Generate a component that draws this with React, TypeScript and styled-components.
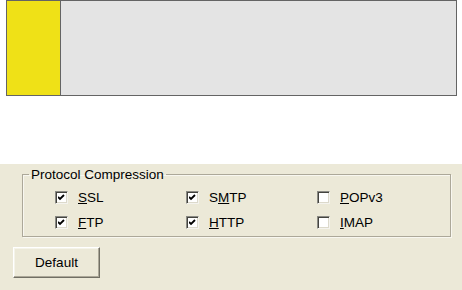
import React from "react";
import styled, { createGlobalStyle } from "styled-components";

const Global = createGlobalStyle`
  html, body { margin: 0; padding: 0; background: #ffffff; }
  body { font-family: "Liberation Sans", Arial, sans-serif; }
`;

const Page = styled.div`
  width: 462px;
  height: 290px;
  display: flex;
  flex-direction: column;
  overflow: hidden;
`;

const TopArea = styled.div`
  height: 164px;
  padding-left: 6px;
  box-sizing: border-box;
`;

const Swatch = styled.div`
  width: 451px;
  height: 96px;
  box-sizing: border-box;
  border: 1px solid #646464;
  display: flex;
`;

const Yellow = styled.div`
  width: 53px;
  background: #efe117;
  border-right: 1px solid #646464;
`;

const Grey = styled.div`
  flex: 1;
  background: #e4e4e4;
`;

const Panel = styled.div`
  flex: 1;
  background: #ece9d8;
  padding: 3px 11px 0 14px;
  display: flex;
  flex-direction: column;
  align-items: flex-start;
  font-size: 13.5px;
  color: #000;
`;

const Group = styled.fieldset`
  margin: 0 0 0 8px;
  padding: 3px 0 1px 0;
  width: 429px;
  box-sizing: border-box;
  border: 1px solid #aca899;
  box-shadow: inset 1px 1px 0 #f8f7f0, 1px 1px 0 #f8f7f0;
`;

const Legend = styled.legend`
  margin-left: 6px;
  padding: 0 2px;
  line-height: 15px;
  font-size: 13.5px;
  color: #000;
`;

const Grid = styled.div`
  display: grid;
  padding-left: 32px;
  grid-template-columns: 131px 131px 131px;
  grid-auto-rows: 25px;
`;

const Option = styled.label`
  display: flex;
  align-items: center;
  gap: 10px;
  line-height: 15px;
`;

const Box = styled.span<{ $checked: boolean }>`
  width: 13px;
  height: 13px;
  box-sizing: border-box;
  border-top: 1px solid #8a8a84;
  border-left: 1px solid #8a8a84;
  border-right: 1px solid #f4f3ee;
  border-bottom: 1px solid #f4f3ee;
  box-shadow: inset 1px 1px 0 #44443f, inset -1px -1px 0 #dcd9cb;
  background: #ffffff;
  display: flex;
  align-items: center;
  justify-content: center;
`;

const U = styled.span`
  text-decoration: underline;
`;

const Button = styled.button`
  margin-top: 10px;
  margin-left: -1px;
  width: 87px;
  height: 31px;
  box-sizing: border-box;
  background: #ece9d8;
  font-family: "Liberation Sans", Arial, sans-serif;
  font-size: 13.5px;
  color: #000;
  border-top: 1px solid #ffffff;
  border-left: 1px solid #ffffff;
  border-right: 1px solid #716f64;
  border-bottom: 1px solid #716f64;
  box-shadow: inset -1px -1px 0 #aca899, inset 1px 1px 0 #f5f4ea;
  padding: 0;
`;

const Check = () => (
  <svg width="7" height="7" viewBox="0 0 7 7">
    <path d="M0 3 L2 5 L6 1" stroke="#000" strokeWidth="1.8" fill="none" />
  </svg>
);

type Opt = { pre: string; key: string; post: string; checked: boolean };

const options: Opt[] = [
  { pre: "", key: "S", post: "SL", checked: true },
  { pre: "S", key: "M", post: "TP", checked: true },
  { pre: "", key: "P", post: "OPv3", checked: false },
  { pre: "", key: "F", post: "TP", checked: true },
  { pre: "", key: "H", post: "TTP", checked: true },
  { pre: "", key: "I", post: "MAP", checked: false },
];

export default function App() {
  return (
    <Page>
      <Global />
      <TopArea>
        <Swatch>
          <Yellow />
          <Grey />
        </Swatch>
      </TopArea>
      <Panel>
        <Group>
          <Legend>Protocol Compression</Legend>
          <Grid>
            {options.map((o, i) => (
              <Option key={i}>
                <Box $checked={o.checked}>{o.checked && <Check />}</Box>
                <span>
                  {o.pre}
                  <U>{o.key}</U>
                  {o.post}
                </span>
              </Option>
            ))}
          </Grid>
        </Group>
        <Button>Default</Button>
      </Panel>
    </Page>
  );
}
